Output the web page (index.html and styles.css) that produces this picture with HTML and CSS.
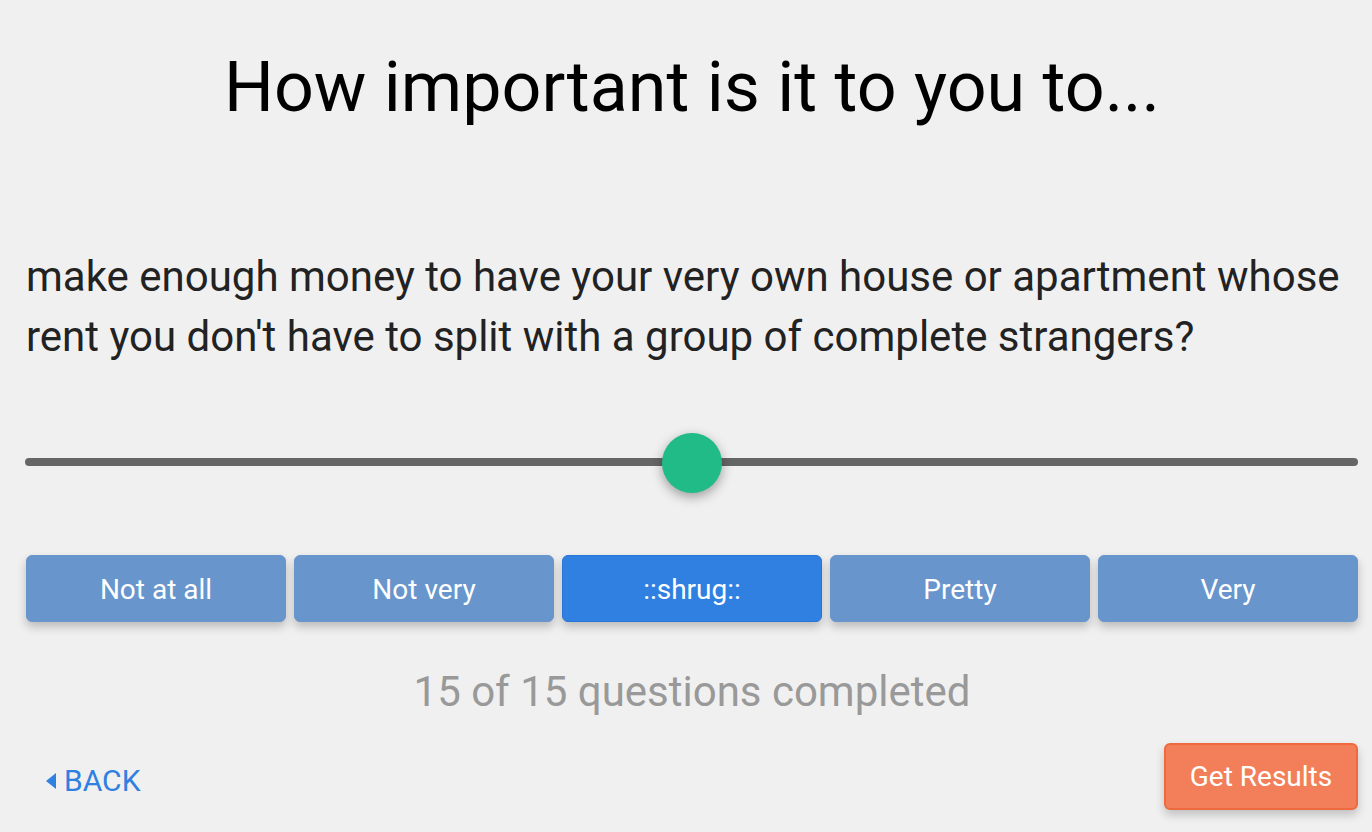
FILE: index.html
```html
<!DOCTYPE html>
<html>
<head>
<meta charset="utf-8">
<link rel="stylesheet" href="styles.css">
</head>
<body>
<div class="page">
  <h1 class="title">How important is it to you to...</h1>
  <p class="question">make enough money to have your very own house or apartment whose rent you don't have to split with a group of complete strangers?</p>
  <div class="slider">
    <div class="track"></div>
    <div class="thumb"></div>
  </div>
  <div class="choices">
    <button class="choice">Not at all</button>
    <button class="choice">Not very</button>
    <button class="choice selected">::shrug::</button>
    <button class="choice">Pretty</button>
    <button class="choice">Very</button>
  </div>
  <div class="progress">15 of 15 questions completed</div>
  <div class="footer">
    <a class="back"><span class="arrow"></span>BACK</a>
    <button class="results">Get Results</button>
  </div>
</div>
</body>
</html>
```
FILE: styles.css
```css
html, body {
  margin: 0;
  padding: 0;
  background: #f0f0f0;
  font-family: Roboto, "Liberation Sans", sans-serif;
}
.page {
  width: 1372px;
  height: 832px;
  box-sizing: border-box;
  padding: 0 14px 0 26px;
  display: flex;
  flex-direction: column;
}
.title {
  margin: 45px 0 0;
  font-size: 70px;
  font-weight: 400;
  line-height: 84px;
  text-align: center;
  color: #000;
}
.question {
  margin: 118px 0 0;
  font-size: 42px;
  line-height: 60px;
  color: #222;
}
.slider {
  position: relative;
  margin: 65px 0 0 -1px;
  height: 60px;
  display: flex;
  align-items: center;
}
.track {
  flex: 1;
  height: 8px;
  border-radius: 4px;
  background: #666;
}
.thumb {
  position: absolute;
  left: 637px;
  top: 1px;
  width: 60px;
  height: 60px;
  border-radius: 50%;
  background: #21bb87;
  box-shadow: 0 4px 12px rgba(0,0,0,0.35);
}
.choices {
  margin-top: 63px;
  display: grid;
  grid-template-columns: repeat(5, 1fr);
  gap: 8px;
}
.choice {
  height: 67px;
  border: 1px solid #6795cc;
  border-radius: 6px;
  background: #6795cc;
  color: #fff;
  font-family: Roboto, "Liberation Sans", sans-serif;
  font-size: 28px;
  box-shadow: 0 5px 10px rgba(0,0,0,0.22);
  padding: 2px 0 0;
}
.choice.selected {
  background: #2f80e0;
  border-color: #2a76d6;
}
.progress {
  margin-top: 46px;
  font-size: 42px;
  line-height: 48px;
  text-align: center;
  color: #999;
}
.footer {
  margin-top: 27px;
  display: flex;
  justify-content: space-between;
  align-items: flex-start;
}
.back {
  margin: 21px 0 0 20px;
  display: flex;
  align-items: center;
  color: #2f80e0;
  font-size: 30px;
  line-height: 34px;
  gap: 8px;
}
.arrow {
  width: 0;
  height: 0;
  border-top: 8px solid transparent;
  border-bottom: 8px solid transparent;
  border-right: 10px solid #2f80e0;
}
.results {
  width: 194px;
  height: 67px;
  border: 2px solid #ee6a3e;
  border-radius: 6px;
  background: #f37f5a;
  color: #fff;
  font-family: Roboto, "Liberation Sans", sans-serif;
  font-size: 28px;
  box-shadow: 0 5px 10px rgba(0,0,0,0.2);
  padding: 0;
}
```
